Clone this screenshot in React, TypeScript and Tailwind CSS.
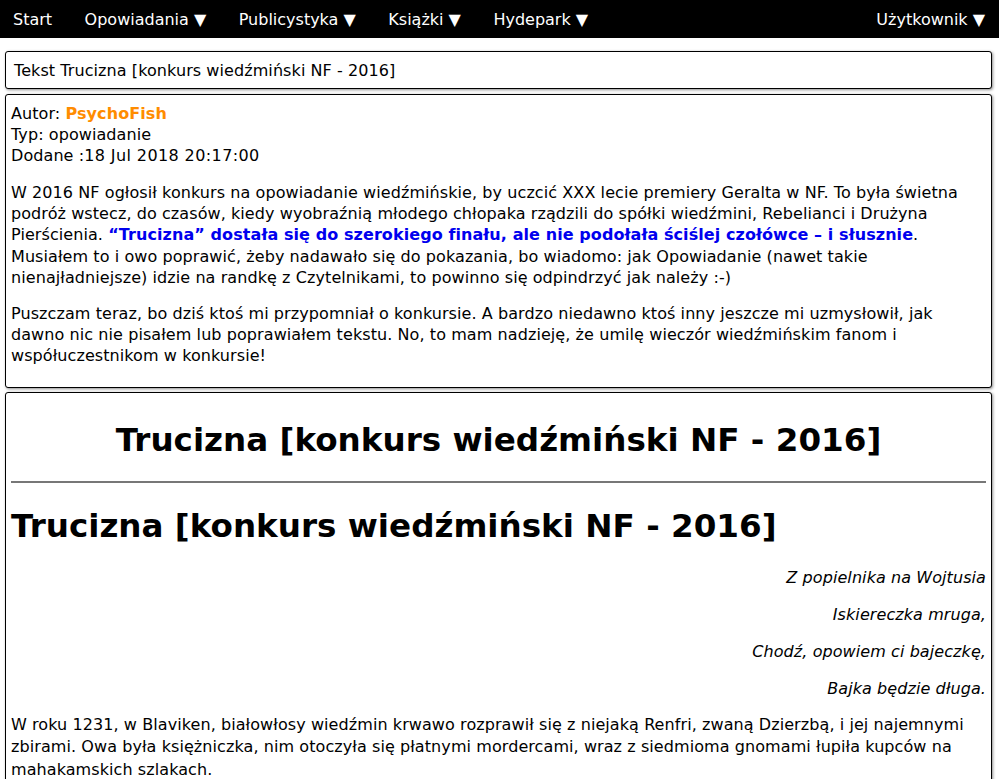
import React from 'react';

const menu = ['Opowiadania', 'Publicystyka', 'Książki', 'Hydepark'];

const poem = ['Z popielnika na Wojtusia', 'Iskiereczka mruga,', 'Chodź, opowiem ci bajeczkę,', 'Bajka będzie długa.'];

const box = 'ml-[5px] mr-[7px] border border-black rounded-[3px] bg-white shadow-[1px_1px_3px_rgba(0,0,0,0.45)]';

export default function App() {
  return (
    <div className="min-h-screen bg-white text-black font-['DejaVu_Sans',Verdana,sans-serif] text-[16px] leading-[21px] tracking-[0.08px]">
      {/* górne menu */}
      <nav className="flex items-center h-[38px] bg-black text-white text-[16px] pl-[13px] pr-[14px] tracking-normal">
        <span>Start</span>
        {menu.map((m) => (
          <span key={m} className="ml-[32.5px]">
            {m} ▼
          </span>
        ))}
        <span className="ml-auto">Użytkownik ▼</span>
      </nav>

      <div className={`${box} mt-[13px] h-[38px] flex items-center px-[8px]`}>
        Tekst Trucizna [konkurs wiedźmiński NF - 2016]
      </div>

      <div className={`${box} mt-[5px] pt-[8px] px-[5px] pb-[5px]`}>
        <div>
          Autor: <span className="font-bold text-[#ff8c00]">PsychoFish</span>
        </div>
        <div>Typ: opowiadanie</div>
        <div>
          Dodane :<span className="tracking-[0.4px]">18 Jul 2018 20:17:00</span>
        </div>
        <p className="mt-[16px] mb-[15px] leading-[21.2px]">
          W 2016 NF ogłosił konkurs na opowiadanie wiedźmińskie, by uczcić XXX lecie premiery Geralta w NF. To była
          świetna podróż wstecz, do czasów, kiedy wyobraźnią młodego chłopaka rządzili do spółki wiedźmini, Rebelianci i
          Drużyna Pierścienia.{' '}
          <span className="font-bold text-[#0000ee]">
            “Trucizna” dostała się do szerokiego finału, ale nie podołała ściślej czołówce – i słusznie
          </span>
          . Musiałem to i owo poprawić, żeby nadawało się do pokazania, bo wiadomo: jak Opowiadanie (nawet takie
          nienajładniejsze) idzie na randkę z Czytelnikami, to powinno się odpindrzyć jak należy :-)
        </p>
        <p className="mb-[15px] leading-[21.2px]">
          Puszczam teraz, bo dziś ktoś mi przypomniał o konkursie. A bardzo niedawno ktoś inny jeszcze mi uzmysłowił, jak
          dawno nic nie pisałem lub poprawiałem tekstu. No, to mam nadzieję, że umilę wieczór wiedźmińskim fanom i
          współuczestnikom w konkursie!
        </p>
      </div>

      <div className={`${box} mt-[4px] px-[5px] pb-[5px]`}>
        <h1 className="text-center font-bold text-[32.6px] leading-[37px] tracking-normal pt-[29px]">
          Trucizna [konkurs wiedźmiński NF - 2016]
        </h1>
        <hr className="mt-[22px] border-0 border-t-2 border-[#777]" />
        <h1 className="font-bold text-[32.6px] leading-[37px] tracking-normal mt-[25px]">
          Trucizna [konkurs wiedźmiński NF - 2016]
        </h1>
        <div className="mt-[22px] flex flex-col gap-[16px]">
          {poem.map((l) => (
            <p key={l} className="text-right italic">
              {l}
            </p>
          ))}
        </div>
        <p className="mt-[15px] leading-[22.5px]">
          W roku 1231, w Blaviken, białowłosy wiedźmin krwawo rozprawił się z niejaką Renfri, zwaną Dzierzbą, i jej
          najemnymi zbirami. Owa była księżniczka, nim otoczyła się płatnymi mordercami, wraz z siedmioma gnomami łupiła
          kupców na mahakamskich szlakach.
        </p>
      </div>
    </div>
  );
}
